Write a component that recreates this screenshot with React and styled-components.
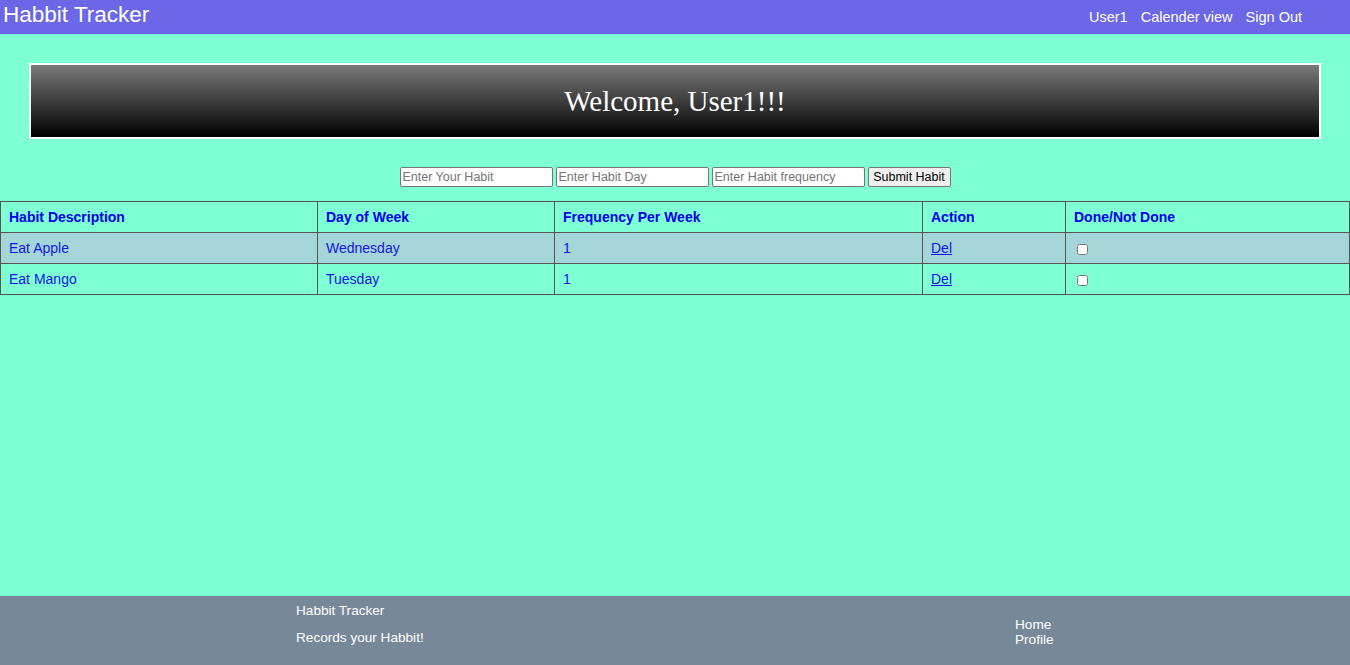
import React from "react";
import styled, { createGlobalStyle } from "styled-components";

const Global = createGlobalStyle`
  html, body { margin: 0; padding: 0; }
  body { font-family: "Liberation Sans", Arial, sans-serif; background: #7fffd4; }
`;

const Page = styled.div`
  min-height: 100vh;
  display: flex;
  flex-direction: column;
`;

const NavBar = styled.nav`
  height: 34px;
  background: #6b67e6;
  display: flex;
  align-items: center;
  justify-content: space-between;
  padding: 0 48px 0 3px;
`;

const Brand = styled.div`
  color: #fff;
  font-size: 22.5px;
  line-height: 30px;
  margin-top: -4px;
`;

const NavLinks = styled.div`
  display: flex;
  gap: 13px;
  margin-top: -1px;
`;

const NavLink = styled.a`
  color: #fff;
  font-size: 14.5px;
  text-decoration: none;
`;

const Main = styled.main`
  flex: 1;
  padding-top: 29px;
`;

const Banner = styled.div`
  margin: 0 29px;
  height: 72px;
  border: 2px solid #fff;
  background: linear-gradient(to bottom, #7a7a7a, #000);
  display: flex;
  align-items: center;
  justify-content: center;
`;

const BannerText = styled.h1`
  margin: 0;
  font-family: "Liberation Serif", "Times New Roman", serif;
  font-weight: normal;
  font-size: 29px;
  color: #fff;
`;

const Form = styled.form`
  display: flex;
  justify-content: center;
  gap: 3px;
  margin-top: 28px;
`;

const Input = styled.input`
  width: 153px;
  height: 20px;
  box-sizing: border-box;
  border: 1px solid #767676;
  border-radius: 2px;
  padding: 1px 2px;
  font-family: "Liberation Sans", Arial, sans-serif;
  font-size: 12.5px;
  background: #fff;
  &::placeholder { color: #757575; }
`;

const Button = styled.button`
  height: 20px;
  width: 83px;
  box-sizing: border-box;
  border: 1px solid #767676;
  border-radius: 2px;
  background: #efefef;
  padding: 0;
  font-family: "Liberation Sans", Arial, sans-serif;
  font-size: 12.5px;
  color: #000;
`;

const Table = styled.table`
  width: 100%;
  margin-top: 14px;
  border-collapse: collapse;
  table-layout: fixed;
  border: 1px solid #555;
`;

const Th = styled.th`
  height: 30px;
  border: 1px solid #555;
  text-align: left;
  padding: 0 8px;
  color: #0000ee;
  font-size: 14px;
  font-weight: bold;
`;

const Row = styled.tr`
  background: ${(p) => (p.$alt ? "#a3d5d9" : "transparent")};
`;

const Td = styled.td`
  height: 30px;
  border: 1px solid #555;
  padding: 0 8px;
  color: #1515e8;
  font-size: 14px;
`;

const DelLink = styled.a`
  color: #1515e8;
  text-decoration: underline;
`;

const Check = styled.input`
  margin: 0 0 0 3px;
  width: 11px;
  height: 11px;
  vertical-align: middle;
`;

const Footer = styled.footer`
  height: 69px;
  background: #778899;
  display: grid;
  grid-template-columns: 296px 719px 1fr;
  color: #fff;
  font-size: 13.6px;
`;

const FooterCol = styled.div`
  grid-column: ${(p) => p.$col};
  padding-top: ${(p) => p.$pt}px;
  display: flex;
  flex-direction: column;
  gap: ${(p) => p.$gap}px;
`;

const FooterLink = styled.a`
  color: #fff;
  text-decoration: none;
  line-height: 15px;
`;

const habits = [
  { desc: "Eat Apple", day: "Wednesday", freq: 1 },
  { desc: "Eat Mango", day: "Tuesday", freq: 1 },
];

export default function App() {
  return (
    <>
      <Global />
      <Page>
        <NavBar>
          <Brand>Habbit Tracker</Brand>
          <NavLinks>
            <NavLink href="#">User1</NavLink>
            <NavLink href="#">Calender view</NavLink>
            <NavLink href="#">Sign Out</NavLink>
          </NavLinks>
        </NavBar>
        <Main>
          <Banner>
            <BannerText>Welcome, User1!!!</BannerText>
          </Banner>
          <Form onSubmit={(e) => e.preventDefault()}>
            <Input placeholder="Enter Your Habit" />
            <Input placeholder="Enter Habit Day" />
            <Input placeholder="Enter Habit frequency" />
            <Button type="submit">Submit Habit</Button>
          </Form>
          <Table>
            <colgroup>
              <col style={{ width: "317px" }} />
              <col style={{ width: "237px" }} />
              <col style={{ width: "368px" }} />
              <col style={{ width: "143px" }} />
              <col />
            </colgroup>
            <thead>
              <tr>
                <Th>Habit Description</Th>
                <Th>Day of Week</Th>
                <Th>Frequency Per Week</Th>
                <Th>Action</Th>
                <Th>Done/Not Done</Th>
              </tr>
            </thead>
            <tbody>
              {habits.map((h, i) => (
                <Row key={h.desc} $alt={i % 2 === 0}>
                  <Td>{h.desc}</Td>
                  <Td>{h.day}</Td>
                  <Td>{h.freq}</Td>
                  <Td>
                    <DelLink href="#">Del</DelLink>
                  </Td>
                  <Td>
                    <Check type="checkbox" />
                  </Td>
                </Row>
              ))}
            </tbody>
          </Table>
        </Main>
        <Footer>
          <FooterCol $col={2} $pt={7} $gap={12}>
            <span>Habbit Tracker</span>
            <span>Records your Habbit!</span>
          </FooterCol>
          <FooterCol $col={3} $pt={21} $gap={0}>
            <FooterLink href="#">Home</FooterLink>
            <FooterLink href="#">Profile</FooterLink>
          </FooterCol>
        </Footer>
      </Page>
    </>
  );
}
